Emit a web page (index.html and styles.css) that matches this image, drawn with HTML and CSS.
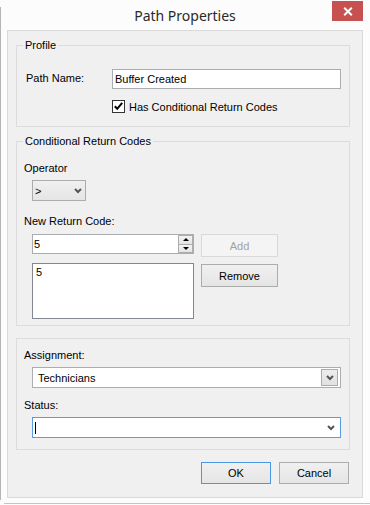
FILE: index.html
```html
<!DOCTYPE html>
<html lang="en">
<head>
<meta charset="utf-8">
<title>Path Properties</title>
<link rel="stylesheet" href="styles.css">
</head>
<body>
<div class="window">
  <div class="titlebar">
    <span class="title">Path Properties</span>
    <button class="close" aria-label="Close">
      <svg width="10" height="9" viewBox="0 0 10 9"><path d="M1.2 0.8 L8.8 8.2 M8.8 0.8 L1.2 8.2" fill="none" stroke="#fff" stroke-width="2"/></svg>
    </button>
  </div>
  <div class="client">
    <fieldset class="group group-profile">
      <legend>Profile</legend>
      <div class="name-row">
        <span class="name-label">Path Name:</span>
        <div class="textbox">Buffer Created</div>
      </div>
      <div class="check-row">
        <span class="checkbox">
          <svg width="11" height="11" viewBox="0 0 11 11"><path d="M1.8 5.2 L4.2 7.8 L9.2 1.8" fill="none" stroke="#000" stroke-width="2"/></svg>
        </span>
        <span>Has Conditional Return Codes</span>
      </div>
    </fieldset>

    <fieldset class="group group-codes">
      <legend>Conditional Return Codes</legend>
      <div class="field-label label-operator">Operator</div>
      <div class="combo combo-op">
        <span>&gt;</span>
        <svg class="chev" width="8" height="6" viewBox="0 0 8 6"><path d="M1 1 L4 4 L7 1" fill="none" stroke="#555" stroke-width="2"/></svg>
      </div>
      <div class="field-label label-new">New Return Code:</div>
      <div class="codes-grid">
        <div class="numeric">
          <span class="num-value">5</span>
          <div class="spinner">
            <span class="spin spin-up"></span>
            <span class="spin spin-down"></span>
          </div>
        </div>
        <button class="btn btn-side" disabled>Add</button>
        <div class="listbox">5</div>
        <button class="btn btn-side btn-remove">Remove</button>
      </div>
    </fieldset>

    <div class="group group-assign">
      <div class="field-label label-assign">Assignment:</div>
      <div class="combo combo-wide combo-assign">
        <span>Technicians</span>
        <span class="drop-btn">
          <svg width="8" height="6" viewBox="0 0 8 6"><path d="M1 1 L4 4 L7 1" fill="none" stroke="#555" stroke-width="2"/></svg>
        </span>
      </div>
      <div class="field-label label-status">Status:</div>
      <div class="combo combo-wide combo-status">
        <span class="caret"></span>
        <svg class="chev" width="8" height="6" viewBox="0 0 8 6"><path d="M1 1 L4 4 L7 1" fill="none" stroke="#555" stroke-width="2"/></svg>
      </div>
    </div>

    <div class="actions">
      <button class="btn btn-action btn-default">OK</button>
      <button class="btn btn-action">Cancel</button>
    </div>
  </div>
</div>
</body>
</html>
```

FILE: styles.css
```css
html, body {
  margin: 0;
  padding: 0;
  background: #fcfcfc;
}

body {
  font-family: "Liberation Sans", Arial, sans-serif;
  font-size: 11px;
  color: #000;
}

.window {
  position: relative;
  width: 370px;
  height: 505px;
  box-sizing: border-box;
  overflow: hidden;
  background:
    linear-gradient(#b5b5b5, #b5b5b5) 0 7px / 1px 493px no-repeat,
    linear-gradient(#c4c4c4, #c4c4c4) 4px 503px / 366px 1px no-repeat,
    #fcfcfc;
}

.titlebar {
  height: 30px;
  display: flex;
  align-items: center;
  justify-content: center;
}

.title {
  font-family: "Noto Sans", "Open Sans", sans-serif;
  font-size: 14px;
  line-height: 30px;
  padding-top: 1px;
  color: #2a2a2a;
}

.close {
  position: absolute;
  top: 1px;
  left: 332px;
  width: 31px;
  height: 20px;
  padding: 0;
  border: 0;
  background: #c75050;
  display: flex;
  align-items: center;
  justify-content: center;
}

.client {
  margin-left: 7px;
  width: 356px;
  height: 468px;
  box-sizing: border-box;
  border: 1px solid #d9d9d9;
  background: #f0f0f0;
  padding: 0 12px 0 8px;
  display: flex;
  flex-direction: column;
}

.group {
  border: 1px solid #dcdcdc;
  min-width: 0;
  box-sizing: border-box;
}

fieldset.group {
  margin: 7px 0 0;
  padding: 0;
}

legend {
  margin-left: 6px;
  padding: 0 2px;
  line-height: 15px;
  font-size: 11px;
}

/* Profile */
.group-profile {
  padding-bottom: 13px !important;
}

.name-row {
  display: grid;
  grid-template-columns: 86px 229px;
  align-items: center;
  margin: 16px 0 0 9px;
}

.name-label {
  margin-top: -2px;
}

.textbox {
  height: 20px;
  box-sizing: border-box;
  border: 1px solid #abadb3;
  background: #fff;
  padding: 0 2px;
  display: flex;
  align-items: center;
}

.check-row {
  display: flex;
  align-items: center;
  gap: 4px;
  height: 13px;
  margin: 11px 0 0 95px;
}

.checkbox {
  width: 13px;
  height: 13px;
  box-sizing: border-box;
  border: 1px solid #333;
  background: #fff;
  display: flex;
  align-items: center;
  justify-content: center;
}

/* Labels */
.field-label {
  line-height: 13px;
  margin-left: 7px;
}

.label-operator { margin-top: 13px; }
.label-new { margin-top: 14px; }
.label-assign { margin-top: 10px; }
.label-status { margin-top: 11px; }

/* Combos */
.combo {
  display: flex;
  align-items: center;
  box-sizing: border-box;
  height: 21px;
  margin: 5px 0 0 15px;
  border: 1px solid #abadb3;
  background: #fff;
}

.combo-op {
  width: 54px;
  padding: 0 3px 0 2px;
  justify-content: space-between;
  border-color: #acacac;
  background: linear-gradient(#f0f0f0, #e5e5e5);
}

.combo-wide {
  width: 309px;
}

.combo-assign {
  padding-left: 5px;
}

.drop-btn {
  margin-left: auto;
  margin-right: 2px;
  width: 17px;
  height: 17px;
  box-sizing: border-box;
  border: 1px solid #acacac;
  background: linear-gradient(#ececec, #e2e2e2);
  display: flex;
  align-items: center;
  justify-content: center;
}

.combo-status {
  border-color: #569de5;
  padding: 0 5px 0 2px;
}

.combo-status .chev {
  margin-left: auto;
}

.caret {
  width: 1px;
  height: 12px;
  background: #000;
}

/* Return codes */
.group-codes {
  padding-bottom: 6px !important;
}

.codes-grid {
  display: grid;
  grid-template-columns: 162px 77px;
  column-gap: 7px;
  row-gap: 6px;
  align-items: start;
  margin: 6px 0 0 15px;
}

.numeric {
  display: flex;
  height: 20px;
  box-sizing: border-box;
  border: 1px solid #abadb3;
  background: #fff;
}

.num-value {
  align-self: center;
  padding-left: 1px;
}

.spinner {
  margin-left: auto;
  width: 15px;
  display: flex;
  flex-direction: column;
}

.spin {
  flex: 1;
  box-sizing: border-box;
  border: 1px solid #acacac;
  background: linear-gradient(#f3f3f3, #e4e4e4);
  display: flex;
  align-items: center;
  justify-content: center;
}

.spin-down {
  border-top: 0;
}

.spin-up::before,
.spin-down::before {
  content: "";
  width: 0;
  height: 0;
  border-left: 3px solid transparent;
  border-right: 3px solid transparent;
}

.spin-up::before {
  border-bottom: 3px solid #000;
}

.spin-down::before {
  border-top: 3px solid #000;
}

.listbox {
  height: 56px;
  box-sizing: border-box;
  border: 1px solid #828790;
  background: #fff;
  padding: 2px 3px;
  line-height: 13px;
}

/* Buttons */
.btn {
  font: inherit;
  color: #000;
  padding: 0;
  box-sizing: border-box;
  border: 1px solid #acacac;
  background: linear-gradient(#f0f0f0, #e5e5e5);
}

.btn:disabled {
  color: #a3a3a3;
  border-color: #d9d9d9;
  background: #f4f4f4;
}

.btn-side {
  width: 77px;
  height: 23px;
}

.btn-remove {
  margin-top: 1px;
}

/* Assignment group */
.group-assign {
  margin-top: 12px;
  padding-bottom: 11px;
}

/* Actions */
.actions {
  display: flex;
  justify-content: flex-end;
  gap: 8px;
  margin-top: 12px;
  padding-right: 1px;
}

.btn-action {
  width: 70px;
  height: 22px;
}

.btn-default {
  border-color: #4a98e4;
}
```
